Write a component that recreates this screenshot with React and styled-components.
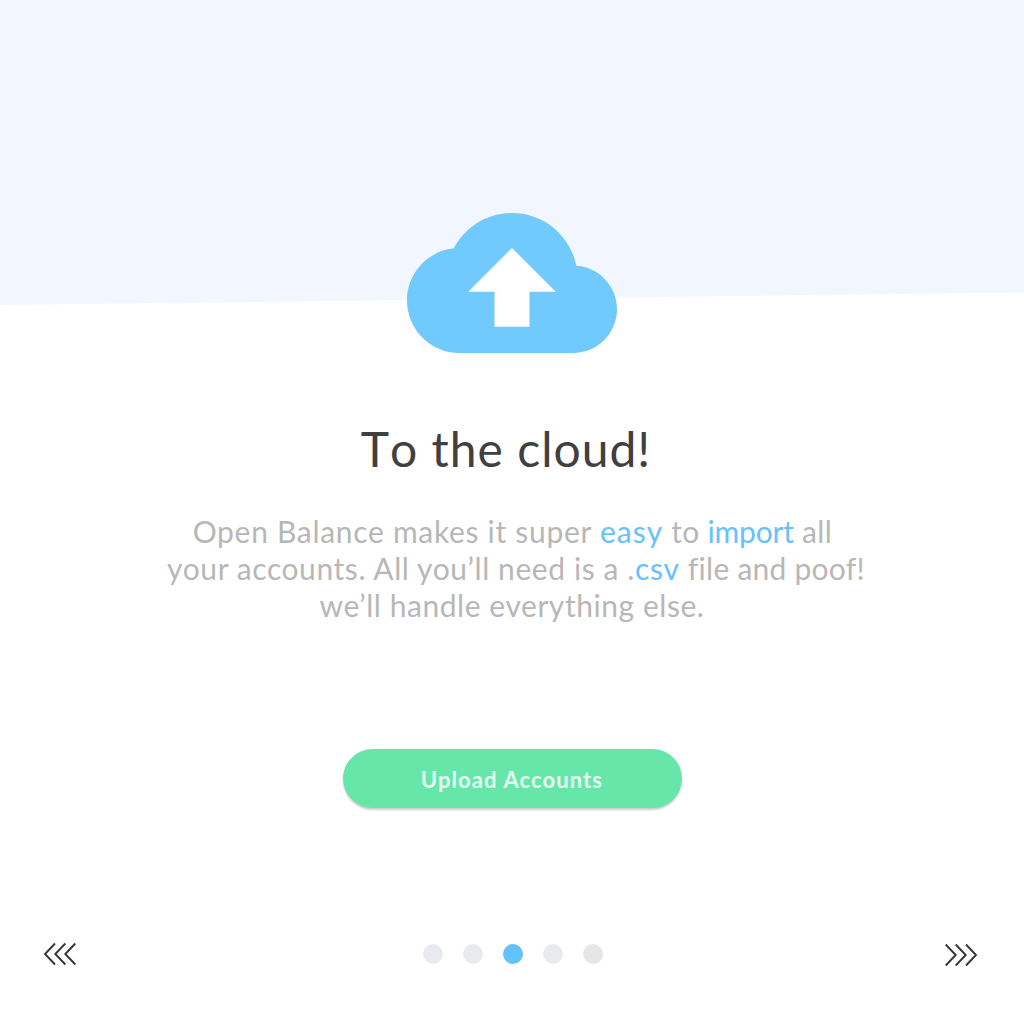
import React from "react";
import styled, { createGlobalStyle } from "styled-components";

const GlobalStyle = createGlobalStyle`
  *, *::before, *::after { box-sizing: border-box; }
  body { margin: 0; background: #fff; }
`;

const Page = styled.main`
  height: 1024px;
  display: flex;
  flex-direction: column;
  align-items: center;
  overflow: hidden;
  background: #fff;
  font-family: Lato, "Liberation Sans", sans-serif;
`;

const Banner = styled.div`
  width: 100%;
  height: 305px;
  flex: none;
  background: #f2f7ff;
  clip-path: polygon(0 0, 100% 0, 100% 292.5px, 0 100%);
`;

const Cloud = styled.svg`
  display: block;
  flex: none;
  width: 210px;
  height: 140px;
  margin-top: -92px;
  z-index: 1;
`;

const Title = styled.h1`
  margin: 66px 0 0;
  height: 60px;
  line-height: 60px;
  font-size: 48px;
  font-weight: 400;
  font-kerning: none;
  white-space: nowrap;
  color: #404040;
`;

const Copy = styled.p`
  margin: 34px 0 0;
  display: flex;
  flex-direction: column;
  align-items: center;
  font-size: 30px;
  line-height: 37px;
  color: #b7b7b7;
`;

const Line = styled.span`
  display: block;
  white-space: pre;
  letter-spacing: ${(p) => p.$track}px;
  margin-left: ${(p) => p.$shift || 0}px;
`;

const Run = styled.span`
  letter-spacing: ${(p) => p.$track}px;
`;

const Accent = styled(Run)`
  color: #67c2fb;
`;

const UploadButton = styled.button`
  width: 339px;
  height: 59px;
  margin-top: 125px;
  padding: 1px 0 0;
  flex: none;
  border: 0;
  border-radius: 30px;
  background: #67e6a9;
  box-shadow: 0 2px 2px rgba(0, 0, 0, 0.2);
  color: #e6fff3;
  font: 700 22px Lato, "Liberation Sans", sans-serif;
  letter-spacing: 1.1px;
`;

const Pager = styled.nav`
  width: 100%;
  height: 24px;
  margin-top: 134px;
  padding: 0 46px 0 43px;
  display: flex;
  align-items: center;
  justify-content: space-between;
`;

const Arrow = styled.button`
  padding: 0;
  border: 0;
  background: none;
  display: flex;
  transform: translateY(${(p) => p.$drop || 0}px);
`;

const Dots = styled.div`
  display: flex;
  gap: 20px;
  margin-left: 5px;
`;

const Dot = styled.span`
  width: 20px;
  height: 20px;
  border-radius: 50%;
  background: ${(p) => p.$color};
`;

const dots = ["#e8eaed", "#e8eaed", "#63c2fc", "#e8eaed", "#e6e6e6"];

function Chevrons({ back }) {
  const d = back
    ? "M12 1.5 2 12l10 10.5M22.3 1.5 12.3 12l10 10.5M32.3 1.5 22.3 12l10 10.5"
    : "M1.7 1.5l10 10.5-10 10.5M11.7 1.5l10 10.5-10 10.5M22 1.5 32 12 22 22.5";
  return (
    <svg width="34" height="24" viewBox="0 0 34 24" fill="none" stroke="#363636" strokeWidth="1.9">
      <path d={d} />
    </svg>
  );
}

export default function App() {
  return (
    <>
      <GlobalStyle />
      <Page>
        <Banner />
        <Cloud viewBox="0 4 24 16" aria-hidden="true">
          <path
            fill="#70cafb"
            d="M19.35 10.04C18.67 6.59 15.64 4 12 4 9.11 4 6.6 5.64 5.35 8.04 2.34 8.36 0 10.91 0 14c0 3.31 2.69 6 6 6h13c2.76 0 5-2.24 5-5 0-2.64-2.05-4.78-4.65-4.96z"
          />
          <path fill="#fff" d="M14 13v4h-4v-4H7l5-5 5 5z" />
        </Cloud>
        <Title>
          <Line $track={1} $shift={-12}>To the cloud!</Line>
        </Title>
        <Copy>
          <Line $track={0.7} $shift={1}>
            Open Balance makes it super <Accent $track={1.1}>easy</Accent>
            <Run $track={0.3}> to </Run>
            <Accent $track={-0.15}>import</Accent>
            <Run $track={0.4}> all</Run>
          </Line>
          <Line $track={0.58} $shift={8}>
            your accounts. All you’ll need is a .<Accent $track={0.8}>csv</Accent>
            <Run $track={0.25}> file and poof!</Run>
          </Line>
          <Line $track={0.55}>we’ll handle everything else.</Line>
        </Copy>
        <UploadButton>Upload Accounts</UploadButton>
        <Pager>
          <Arrow aria-label="Previous"><Chevrons back /></Arrow>
          <Dots>
            {dots.map((color, i) => (
              <Dot key={i} $color={color} />
            ))}
          </Dots>
          <Arrow $drop={1} aria-label="Next"><Chevrons /></Arrow>
        </Pager>
      </Page>
    </>
  );
}
